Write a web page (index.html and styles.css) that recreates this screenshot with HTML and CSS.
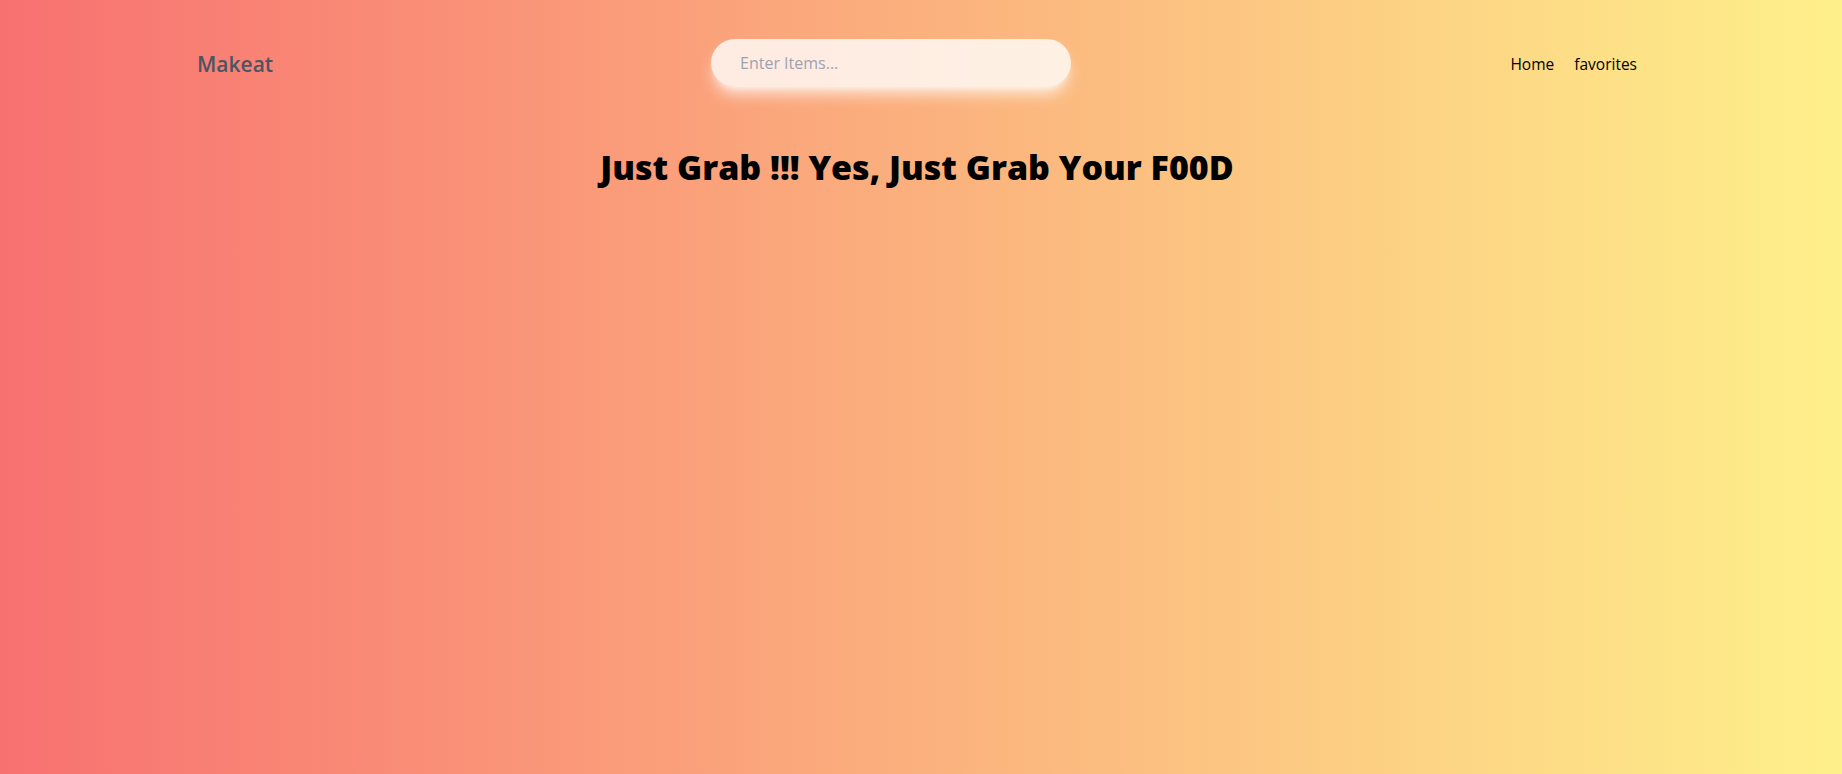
FILE: index.html
```html
<!DOCTYPE html>
<html lang="en">
<head>
<meta charset="utf-8">
<title>Makeat</title>
<link rel="stylesheet" href="styles.css">
</head>
<body>
<div class="page">
  <header class="header">
    <div class="logo">Makeat</div>
    <input class="search" type="text" placeholder="Enter Items...">
    <nav class="nav">
      <a href="#" class="nav-link">Home</a>
      <a href="#" class="nav-link">favorites</a>
    </nav>
  </header>
  <h1 class="title">Just Grab !!! Yes, Just Grab Your F00D</h1>
</div>
</body>
</html>
```
FILE: styles.css
```css
* { box-sizing: border-box; }
html, body { margin: 0; padding: 0; height: 100%; }
body {
  font-family: "Open Sans", "Noto Sans", sans-serif;
  background: linear-gradient(to right, #f87171, #fef08a);
  min-height: 774px;
}
.page {
  width: 1448px;
  margin: 0 auto;
  padding: 39px 8px 0 0;
}
.header {
  display: flex;
  align-items: center;
  height: 48px;
}
.logo {
  font-size: 21px;
  font-weight: 600;
  color: #4b5563;
  width: 75px;
  padding-top: 2px;
}
.search {
  width: 360px;
  height: 48px;
  margin-left: 439px;
  border: none;
  outline: none;
  border-radius: 24px;
  padding: 0 29px;
  font-family: inherit;
  font-size: 16px;
  background: rgba(255, 255, 255, 0.78);
  box-shadow: 0 10px 15px -3px rgba(255, 255, 255, 0.7), 0 4px 6px -4px rgba(255, 255, 255, 0.7);
  color: #374151;
}
.search::placeholder { color: #9ca3af; }
.nav {
  display: flex;
  gap: 20px;
  margin-left: auto;
  padding-top: 2px;
}
.nav-link {
  color: #000;
  text-decoration: none;
  font-size: 15.5px;
}
.title {
  margin: 60px 0 0;
  text-align: center;
  font-size: 34px;
  font-weight: 800;
  color: #000;
  line-height: 40px;
}
```
